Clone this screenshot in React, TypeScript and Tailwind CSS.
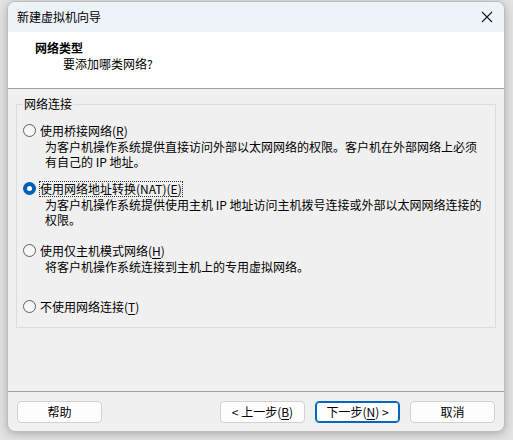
import React from "react";

const font = { fontFamily: '"Noto Sans CJK SC", "Microsoft YaHei", sans-serif' };

function Radio({ checked }: { checked?: boolean }) {
  if (checked) {
    return (
      <span className="flex h-[13px] w-[13px] shrink-0 items-center justify-center rounded-full bg-[#005fb8]">
        <span className="h-[5px] w-[5px] rounded-full bg-white" />
      </span>
    );
  }
  return <span className="h-[13px] w-[13px] shrink-0 rounded-full border border-[#5d5d5d] bg-[#f7f7f7]" />;
}

function Option({
  label,
  keyChar,
  desc,
  checked,
}: {
  label: string;
  keyChar: string;
  desc?: string[];
  checked?: boolean;
}) {
  return (
    <div className="flex flex-col">
      <div className="flex h-[15px] items-center gap-[4px]">
        <Radio checked={checked} />
        <span className={checked ? "outline outline-1 outline-dotted outline-[#333] leading-[14px]" : "leading-[14px]"}>
          {label}(<span className="underline underline-offset-2">{keyChar}</span>)
        </span>
      </div>
      {desc && (
        <div className="pl-[22px] pt-[1px] leading-[15px]">
          {desc.map((d) => (
            <div key={d}>{d}</div>
          ))}
        </div>
      )}
    </div>
  );
}

function Btn({ children, primary }: { children: React.ReactNode; primary?: boolean }) {
  return (
    <button
      className={`flex h-[22px] w-[85px] items-center justify-center rounded-[4px] bg-[#fdfdfd] text-[12px] ${
        primary ? "border border-[#0067c0] shadow-[inset_0_0_0_1px_#0067c0]" : "border border-[#d1d1d1]"
      }`}
    >
      {children}
    </button>
  );
}

export default function App() {
  return (
    <div className="h-[440px] w-[513px] overflow-hidden bg-[#e3e3e3] pl-[7px] pt-[1px] text-[12px] text-black" style={font}>
      <div className="flex h-[431px] w-[498px] flex-col overflow-hidden rounded-[8px] border border-[#bdbdbd] bg-[#f0f0f0] shadow-[0_2px_10px_rgba(0,0,0,0.25)]">
        {/* title bar */}
        <div className="flex h-[30px] shrink-0 items-center justify-between bg-[#eef2f9] pl-[9px] pr-[10px]">
          <span>新建虚拟机向导</span>
          <svg width="12" height="12" viewBox="0 0 12 12" className="mr-[1px]">
            <path d="M1 1 L11 11 M11 1 L1 11" stroke="#1a1a1a" strokeWidth="1.1" />
          </svg>
        </div>

        {/* header */}
        <div className="h-[57px] shrink-0 border-b border-[#a0a0a0] bg-white pl-[27px] pt-[8px] leading-[16px]">
          <div className="font-bold">网络类型</div>
          <div className="pl-[28px]">要添加哪类网络?</div>
        </div>

        {/* body */}
        <div className="flex-1 px-[8px] pt-[7px]">
          <fieldset className="h-[232px] border border-[#dcdcdc] px-[6px] pb-0 pt-[11px]">
            <legend className="px-[1px] leading-[16px]">网络连接</legend>
            <div className="flex flex-col">
              <Option
                label="使用桥接网络"
                keyChar="R"
                desc={["为客户机操作系统提供直接访问外部以太网网络的权限。客户机在外部网络上必须", "有自己的 IP 地址。"]}
              />
              <div className="mt-[12px]">
                <Option
                  checked
                  label="使用网络地址转换(NAT)"
                  keyChar="E"
                  desc={["为客户机操作系统提供使用主机 IP 地址访问主机拨号连接或外部以太网网络连接的", "权限。"]}
                />
              </div>
              <div className="mt-[16px]">
                <Option label="使用仅主机模式网络" keyChar="H" desc={["将客户机操作系统连接到主机上的专用虚拟网络。"]} />
              </div>
              <div className="mt-[25px]">
                <Option label="不使用网络连接" keyChar="T" />
              </div>
            </div>
          </fieldset>
        </div>

        {/* footer */}
        <div className="h-[40px] shrink-0 border-t border-[#a0a0a0] px-[9px] pt-[9px]">
          <div className="flex items-center">
            <Btn>帮助</Btn>
            <div className="ml-auto flex gap-[10px]">
              <Btn>&lt; 上一步(<span className="underline underline-offset-2">B</span>)</Btn>
              <Btn primary>下一步(<span className="underline underline-offset-2">N</span>) &gt;</Btn>
              <Btn>取消</Btn>
            </div>
          </div>
        </div>
      </div>
    </div>
  );
}
